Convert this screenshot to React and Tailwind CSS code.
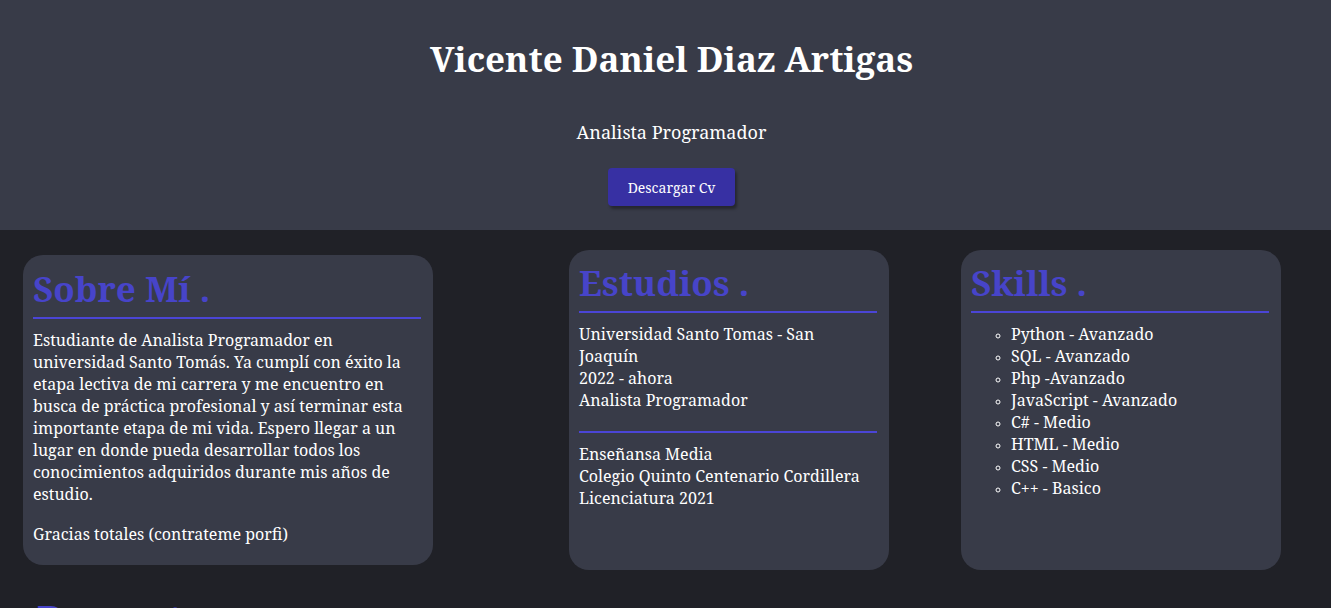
import React from "react";

const skills = [
    "Python - Avanzado",
    "SQL - Avanzado",
    "Php -Avanzado",
    "JavaScript - Avanzado",
    "C# - Medio",
    "HTML - Medio",
    "CSS - Medio",
    "C++ - Basico",
];

function CardTitle({ children }) {
    return (
        <div>
            <h2 className="text-[35px] font-bold leading-[44px] text-[#4744c9]">{children}</h2>
            <div className="mt-[6px] h-[2px] bg-[#4b45d6]" />
        </div>
    );
}

export default function App() {
    return (
        <div className="h-[608px] overflow-hidden bg-[#202127] text-white font-['Noto_Serif','DejaVu_Serif',serif]">
            <header className="h-[230px] bg-[#383b48] flex flex-col items-center pt-[36px] pl-[12px]">
                <h1 className="text-[35px] font-bold leading-[46px]">Vicente Daniel Diaz Artigas</h1>
                <p className="mt-[38px] text-[18px] leading-[24px]">Analista Programador</p>
                <button className="mt-[24px] h-[38px] w-[127px] rounded-[4px] bg-[#3730a3] text-[14px] shadow-[2px_3px_3px_rgba(0,0,0,0.35)]">
                    Descargar Cv
                </button>
            </header>

            <main className="flex items-center pt-[20px]">
                <section className="ml-[23px] w-[410px] h-[310px] rounded-[20px] bg-[#383b48] pl-[10px] pr-[12px] pt-[12px]">
                    <CardTitle>Sobre Mí .</CardTitle>
                    <p className="mt-[10px] text-[16px] leading-[22px]">
                        Estudiante de Analista Programador en universidad Santo Tomás. Ya cumplí con éxito la etapa lectiva de mi carrera y me encuentro en busca de práctica profesional y así terminar esta importante etapa de mi vida. Espero llegar a un lugar en donde pueda desarrollar todos los conocimientos adquiridos durante mis años de estudio.
                    </p>
                    <p className="mt-[18px] text-[16px] leading-[22px]">Gracias totales (contrateme porfi)</p>
                </section>

                <section className="ml-[136px] w-[320px] h-[320px] rounded-[20px] bg-[#383b48] pl-[10px] pr-[12px] pt-[11px]">
                    <CardTitle>Estudios .</CardTitle>
                    <div className="mt-[10px] text-[16px] leading-[22px]">
                        <p>Universidad Santo Tomas - San Joaquín</p>
                        <p>2022 - ahora</p>
                        <p>Analista Programador</p>
                    </div>
                    <div className="mt-[20px] h-[2px] bg-[#4b45d6]" />
                    <div className="mt-[10px] text-[16px] leading-[22px]">
                        <p>Enseñansa Media</p>
                        <p>Colegio Quinto Centenario Cordillera</p>
                        <p>Licenciatura 2021</p>
                    </div>
                </section>

                <section className="ml-[72px] w-[320px] h-[320px] rounded-[20px] bg-[#383b48] pl-[10px] pr-[12px] pt-[11px]">
                    <CardTitle>Skills .</CardTitle>
                    <ul className="mt-[10px] pl-[40px] list-[circle] text-[16px] leading-[22px] marker:text-[12px]">
                        {skills.map((s) => (
                            <li key={s}>{s}</li>
                        ))}
                    </ul>
                </section>
            </main>

            <h2 className="mt-[24px] ml-[37px] text-[38px] font-bold leading-[48px] text-[#4744c9]">Proyectos .</h2>
        </div>
    );
}
